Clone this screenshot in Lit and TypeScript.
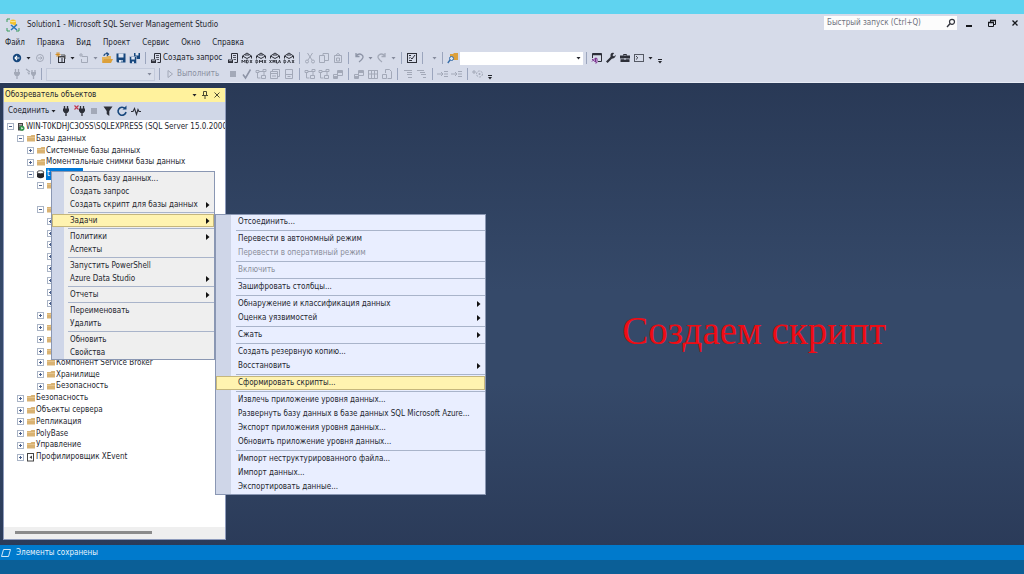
import { LitElement, html, css, svg, nothing, TemplateResult } from "lit";
import { customElement, state } from "lit/decorators.js";
import { classMap } from "lit/directives/class-map.js";

const ink = "#2d2f38";
const grey = "#a3a9b8";

const g = (body: unknown, w = 12) =>
  html`<svg width=${w} height="12" viewBox="0 0 ${w} 12" fill="none" aria-hidden="true">${body}</svg>`;

const query = (mark: string) =>
  g(svg`<path d="M1.500 6.500V4l4.500-3 4.500 3v2.500M1.500 4 6 6.500 10.500 4M4 3h4" stroke=${ink}/><path d=${mark} stroke=${ink} stroke-width=".9"/>`);

const icons: Record<string, TemplateResult> = {
  back: g(svg`<circle cx="6" cy="6" r="4.200" fill="#17477d"/><path d="M8.500 6H4m2-2L4 6l2 2" stroke="#fff" stroke-width="1.100"/>`),
  forward: g(svg`<circle cx="6" cy="6" r="3.500" stroke=${grey}/><path d="M4 6h4M6.500 4.500 8 6 6.500 7.500" stroke=${grey}/>`),
  project: g(svg`<rect x="3.500" y="4.500" width="6" height="6" stroke=${ink}/><path d="M4 5h6M6 3h4v4" stroke="#555"/><path d="M3 0v5M.5 2.500h5M1.200.8l3.600 3.500M4.800.8 1.200 4.300" stroke="#d38b1d" stroke-width=".9"/><path d="M6 7h2M6 9h2" stroke=${ink}/>`),
  addItem: g(svg`<path d="M4 4.500h5.500v6h-6V7" stroke=${grey}/><path d="M3 1v4M1 3h4" stroke=${grey}/>`),
  openFolder: g(svg`<path d="M1 5h4l1-1h4v6H1z" fill="#e4b45c"/><path d="M3 7h9l-2 4H1z" fill="#dca03b"/><path d="M3 4q0-3 4-2M5.500.5 7.500 2 6 4" stroke="#17477d" stroke-width="1.200"/>`),
  save: g(svg`<path d="M1.500 1.500h9v9h-8l-1-1z" fill="#17477d"/><path d="M3.500 1.500h5v4h-5z" fill="#dfe6f3"/><path d="M4 8h4v2.500H4z" fill="#dfe6f3"/><path d="M6.500 8.500h1v2h-1z" fill="#17477d"/>`),
  saveAll: g(svg`<path d="M5 1h6v6H5z" fill="#17477d"/><path d="M6.500 1h3v2.500h-3z" fill="#dfe6f3"/><path d="M.5 4.500h7v7h-6l-1-1z" fill="#17477d" stroke="#d6dbe9" stroke-width=".5"/><path d="M2.300 5h3.500v2.500H2.300zM3 9.500h2v2H3z" fill="#dfe6f3"/>`),
  newQuery: g(svg`<path d="M4.500 7V1.500h6v9h-3" stroke=${ink}/><path d="M6 3.500h3M6 5.500h3M6.500 7.500H9" stroke=${ink} stroke-width=".8"/><path d="M1 7.500h5v3.500H1z" fill=${ink}/><path d="M2 8.700h3" stroke="#d6dbe9" stroke-width=".7"/>`),
  mdx: query("M1 11V8l1.500 2L4 8v3M5.500 8v3h1.200q1.300-1.500 0-3zM9 8l2 3m0-3L9 11"),
  dmx: query("M1 8v3h1q1.500-1.500 0-3zM4.500 11V8L6 10l1.500-2v3M9 8l2 3m0-3L9 11"),
  xmla: query("M.5 8l2 3m0-3-2 3M4 11V8l1 2 1-2v3M7.500 8v3H9M9.500 11l1-3 1 3"),
  dax: query("M1 8v3h1q1.500-1.500 0-3zM4.500 11 6 8l1.500 3M9 8l2 3m0-3L9 11"),
  cut: g(svg`<path d="M3.500 1 8 8M8.500 1 4 8" stroke=${grey}/><circle cx="3" cy="9.500" r="1.500" stroke=${grey}/><circle cx="9" cy="9.500" r="1.500" stroke=${grey}/>`),
  copy: g(svg`<path d="M1.500 3.500h5v7h-5zM5 3V1.500h5.500v7H7" stroke=${grey}/>`),
  paste: g(svg`<path d="M2.500 5V3.500h7v7h-7zM4 3.500q2-4 4 0M4.500 6h3v3h-3z" stroke=${grey}/>`),
  undo: g(svg`<path d="M3 1v3.500h3.500M3 4q3-3.500 6-1t-3 7" stroke="#8d94a6" stroke-width="1.300"/>`),
  redo: g(svg`<path d="M9 1v3.500H5.500M9 4Q6 .5 3 3t3 7" stroke=${grey} stroke-width="1.300"/>`),
  activity: g(svg`<rect x="1.500" y="1.500" width="9" height="9" stroke=${ink}/><path d="M3 3.500h2M3 6h1M3 8.500h3M9 3 6 7 4.500 5.500" stroke=${ink}/>`),
  findFolder: g(svg`<path d="M3 2h3l1-1h4v7H3z" fill="#dca03b"/><circle cx="4.500" cy="6.500" r="2" fill="#dbe8f8" stroke="#356ca8"/><path d="M3 8 .8 11" stroke="#356ca8" stroke-width="1.300"/>`),
  studio: g(svg`<path d="M1.500 6V1.500h9v8H7" stroke=${ink}/><path d="M1.500 2.500h9" stroke=${ink} stroke-width="1.500"/><path d="m1 7 3.500 3V6L1 9.500M4.500 6l1.500.500v4l-1.500.700" stroke="#7b2d8e"/>`),
  wrench: g(svg`<path d="M1.800 10.300 7 5" stroke=${ink} stroke-width="2.200"/><path d="M10.800 2.800 9 4.500 7.500 3.200 9.200 1Q5.500 0 5.500 3.500T8 6.500t2.800-3.700" fill=${ink}/>`),
  toolbox: g(svg`<path d="M4.500 3.500v-1h3v1" stroke=${ink}/><path d="M1 3.500h10v3H1zM1.500 7.200h9V10h-9z" fill=${ink}/><path d="M5.500 6h1v2h-1z" fill="#d6dbe9"/>`),
  console: g(svg`<rect x="1.500" y="2.500" width="9" height="7" stroke="#555964"/><path d="m3 4 1.800 1.800L3 7.500" stroke=${ink} stroke-width=".9"/>`),
  plugOff: g(svg`<path d="M4.500 1v3M7.500 1v3M6 8v3" stroke=${grey} stroke-width="1.300"/><path d="M3 4h6v2L7.500 8h-3L3 6z" fill=${grey}/>`),
  plugSwap: g(svg`<path d="M1 1l4 3M7 2v2M10 2v2M8.500 8v3" stroke=${grey} stroke-width="1.300"/><path d="M6 4h5v2L9.500 8h-2L6 6zM2 4l3 1-1 2z" fill=${grey}/>`),
  play: g(svg`<path d="m4 2.500 4.500 3.500L4 9.500z" stroke=${grey}/>`),
  stop: g(svg`<path d="M3 3h6v6H3z" fill=${grey}/>`),
  check: g(svg`<path d="M2 6.500 4.500 10 9.500 1.500" stroke="#8d94a6" stroke-width="1.500"/>`),
  plan: g(svg`<path d="M1 2.500h3v2H1zM8 1.500h3v2H8zM4 3.500h4M2.500 5v5h3M6.500 7.500h4v3h-4zM9 4v3" stroke=${grey}/>`),
  windows: g(svg`<path d="M1.500 3.500h7v7h-7zM3.500 3V1.500h7v7H9M2 5.500h6M3 8h4" stroke=${grey}/>`),
  sheet: g(svg`<path d="M2.500 1.500h7v9h-7zM3 6.500h6M4.500 8.500h3" stroke=${grey}/>`),
  grid: g(svg`<path d="M1 2.500h10M1.500 2v8.500h9V2M1.500 6h9M4.500 3v7M7.500 3v7" stroke=${grey}/>`),
  blocks: g(svg`<path d="M1.500 6.500h4v4h-4zM5.500 2.500h5v5h-5z" stroke=${grey}/><path d="M6 3h4v2H6zM2 8h3v2H2z" fill=${grey}/>`),
  fileOut: g(svg`<path d="M4.500 5V1.500h4l2 2v7h-4M1.500 6.500h4v4h-4z" stroke=${grey}/>`),
  indent: g(svg`<path d="M2 2.500h8M5 4.500h5M5 6.500h5M6 9.500h4" stroke=${grey}/>`),
  outdent: g(svg`<path d="M1 2.500h7M4 4.500h5M5 6.500h5M7 9.500h3" stroke=${grey}/>`),
  shift: g(svg`<path d="M0 6h6M4 4l2 2-2 2M7 3.500h4M7 6h4M7 8.500h4" stroke=${grey}/>`),
  params: g(svg`<path d="M0 4h4M2 2v4" stroke=${grey}/><circle cx="7.500" cy="6" r="3" stroke=${grey} stroke-dasharray="2 1"/><circle cx="7.500" cy="6" r="1" fill=${grey}/>`),
  plug: g(svg`<path d="M4.500 1v3M7.500 1v3M6 8v3" stroke=${ink} stroke-width="1.400"/><path d="M3 3.500h6V6L7.500 8h-3L3 6z" fill=${ink}/>`),
  unplug: g(svg`<path d="M6.500 1v3M9.500 1v3M8 8v3" stroke=${ink} stroke-width="1.300"/><path d="M5 3.500h6V6L9.500 8h-3L5 6z" fill=${ink}/><path d="m.5.5 4 4m0-4-4 4" stroke="#c3364a" stroke-width="1.100"/>`),
  funnel: g(svg`<path d="M1.500 1.500h9L7.300 6v5L4.700 9V6z" fill=${ink}/>`),
  refresh: g(svg`<path d="M9 3.500A4 4 0 1 0 10 7" stroke="#17477d" stroke-width="1.600"/><path d="M10.500.5v4h-4z" fill="#17477d"/>`),
  pulse: g(svg`<path d="M1 6.500h2l1.500-3 2 6 1.500-5 1 2h2" stroke=${ink} stroke-width="1.100"/>`),
};

const small = (body: unknown) =>
  html`<svg width="9" height="9" viewBox="0 0 9 9" fill="none" aria-hidden="true">${body}</svg>`;

const nodeIcons: Record<string, TemplateResult> = {
  folder: small(svg`<path d="M1 2h3.500l1-1H9v6.500H1z" fill="#d9b272"/><path d="M1 3.500h8" stroke="#e9cd9c" stroke-width=".7"/>`),
  server: small(svg`<path d="M2 1h5v7.500H2z" fill="#444"/><path d="M3 2.500h3M3 4h3" stroke="#ddd" stroke-width=".7"/><circle cx="6" cy="6.300" r="2.500" fill="#2d9449"/><path d="m5.300 5 2 1.300-2 1.300z" fill="#fff"/>`),
  database: small(svg`<path d="M1 2.200v4.800Q4.500 9.500 8 7V2.200z" fill="#26262b"/><ellipse cx="4.500" cy="2.200" rx="3.300" ry="1.500" fill="#fff" stroke="#26262b" stroke-width=".8"/>`),
  profiler: small(svg`<rect x="1.500" y=".5" width="6" height="7.500" stroke="#444"/><path d="M6 2.500 3.500 4.300 6 6z" fill="#444"/>`),
  none: small(nothing),
};

interface Node { level: number; label: string; icon?: string; open?: boolean; leaf?: boolean; selected?: boolean }

const nodes: Node[] = [
  { level: 0, label: "WIN-T0KDHJC3OSS\\SQLEXPRESS (SQL Server 15.0.2000", icon: "server", open: true },
  { level: 1, label: "Базы данных", open: true },
  { level: 2, label: "Системные базы данных" },
  { level: 2, label: "Моментальные снимки базы данных" },
  { level: 2, label: "t", icon: "database", open: true, selected: true },
  { level: 3, label: "", open: true },
  { level: 4, label: "", icon: "none", leaf: true },
  { level: 3, label: "", open: true },
  ...Array.from({ length: 8 }, () => ({ level: 4, label: "" })),
  ...Array.from({ length: 4 }, () => ({ level: 3, label: "" })),
  { level: 3, label: "Компонент Service Broker" },
  { level: 3, label: "Хранилище" },
  { level: 3, label: "Безопасность" },
  { level: 1, label: "Безопасность" },
  { level: 1, label: "Объекты сервера" },
  { level: 1, label: "Репликация" },
  { level: 1, label: "PolyBase" },
  { level: 1, label: "Управление" },
  { level: 1, label: "Профилировщик XEvent", icon: "profiler" },
];

interface Entry { label: string; sub?: boolean; off?: boolean }
const sep = null;

const contextEntries: (Entry | null)[] = [
  { label: "Создать базу данных..." },
  { label: "Создать запрос" },
  { label: "Создать скрипт для базы данных", sub: true },
  sep,
  { label: "Задачи", sub: true },
  sep,
  { label: "Политики", sub: true },
  { label: "Аспекты" },
  sep,
  { label: "Запустить PowerShell" },
  { label: "Azure Data Studio", sub: true },
  sep,
  { label: "Отчеты", sub: true },
  sep,
  { label: "Переименовать" },
  { label: "Удалить" },
  sep,
  { label: "Обновить" },
  { label: "Свойства" },
];

const taskEntries: (Entry | null)[] = [
  { label: "Отсоединить..." },
  sep,
  { label: "Перевести в автономный режим" },
  { label: "Перевести в оперативный режим", off: true },
  sep,
  { label: "Включить", off: true },
  sep,
  { label: "Зашифровать столбцы..." },
  sep,
  { label: "Обнаружение и классификация данных", sub: true },
  { label: "Оценка уязвимостей", sub: true },
  sep,
  { label: "Сжать", sub: true },
  sep,
  { label: "Создать резервную копию..." },
  { label: "Восстановить", sub: true },
  sep,
  { label: "Сформировать скрипты..." },
  sep,
  { label: "Извлечь приложение уровня данных..." },
  { label: "Развернуть базу данных в базе данных SQL Microsoft Azure..." },
  { label: "Экспорт приложения уровня данных..." },
  { label: "Обновить приложение уровня данных..." },
  sep,
  { label: "Импорт неструктурированного файла..." },
  { label: "Импорт данных..." },
  { label: "Экспортировать данные..." },
];

@customElement("app-root")
export class AppRoot extends LitElement {
  @state() private contextActive = "Задачи";
  @state() private taskActive = "Сформировать скрипты...";

  static styles = css`
    :host {
      display: flex;
      flex-direction: column;
      height: 100vh;
      overflow: hidden;
      font: 8px/12px "DejaVu Sans Condensed", "DejaVu Sans", sans-serif;
      color: #24262e;
    }
    * { box-sizing: border-box; }
    button, input, select { font: inherit; color: inherit; margin: 0; padding: 0; border: 0; background: none; border-radius: 0; }
    ul { list-style: none; margin: 0; padding: 0; }
    svg { display: block; flex: none; }
    .band-top { height: 14px; background: #5fd3f0; flex: none; }
    .band-bottom { height: 14px; background: #0b5f97; flex: none; }
    .chrome { background: #d6dbe9; border-bottom: 1px solid #e6eaf4; flex: none; }
    .titlebar { display: flex; align-items: center; height: 22px; padding: 0 3px 0 6px; }
    .title { flex: 1; margin-left: 7px; }
    .search { display: flex; align-items: center; width: 133px; height: 14px; margin-bottom: 4px; padding: 0 1px 0 3px; background: #fcfcfc; }
    .search input { flex: 1; min-width: 0; outline: 0; }
    .search input::placeholder { color: #6f727c; opacity: 1; }
    .window-buttons { display: flex; gap: 11px; margin: 0 0 4px 6px; }
    .menubar { display: flex; gap: 12px; height: 14px; align-items: center; padding-left: 5px; }
    .toolbar { display: flex; align-items: center; height: 16px; }
    .grip { width: 5px; height: 12px; margin: 0 1px 0 4px; background: radial-gradient(circle, #a9b1c4 30%, transparent 40%) 0 0 / 2px 2px; flex: none; }
    .tool { display: flex; justify-content: center; align-items: center; width: 14px; height: 14px; flex: none; }
    .caret { display: flex; justify-content: center; align-items: center; width: 9px; height: 12px; flex: none; }
    .divider { width: 1px; height: 12px; margin: 0 3px; background: #9ba5bd; flex: none; }
    .text-tool { display: flex; align-items: center; justify-content: flex-start; width: 77px; height: 14px; padding-left: 1px; gap: 1px; white-space: nowrap; flex: none; }
    .execute { width: 63px; color: #8a90a1; }
    .spacer { width: 4px; }
    .combo { display: flex; align-items: center; height: 13px; background: #fff; flex: none; }
    .combo select { appearance: none; flex: 1; height: 13px; min-width: 0; outline: 0; }
    .wide { width: 123px; }
    .database { width: 109px; margin: 0 1px; background: #d9deea; border: 1px solid #c3cadb; }
    .work { flex: 1; min-height: 0; display: flex; padding: 5px 0 5px 3px; position: relative; background: linear-gradient(#293956, #354969 45%, #354969 65%, #2b3b59); }
    .panel { width: 223px; display: flex; flex-direction: column; border: 1px solid #8e9bbc; border-top: 0; background: #fff; flex: none; }
    .panel-head { display: flex; align-items: center; height: 14px; padding: 0 2px 0 1px; background: #fff29d; flex: none; }
    .panel-title { flex: 1; font: inherit; margin: 0; }
    .panel-tools { display: flex; align-items: center; height: 18px; padding-left: 4px; background: #d0d7e7; flex: none; }
    .connect { display: flex; align-items: center; gap: 2px; margin-right: 3px; }
    .tree { flex: 1; min-height: 0; display: flex; flex-direction: column; padding: 1px 0 64px 3px; overflow: hidden; }
    .node { flex: 1; min-height: 0; display: flex; align-items: center; white-space: nowrap; }
    .indent { width: 10px; flex: none; }
    .expander { width: 7px; height: 7px; margin-right: 2px; flex: none; }
    .label { padding-left: 1px; }
    .selected { background: #0078d7; color: #fff; width: 37px; margin-left: 1px; }
    .scroll { height: 12px; padding: 4px 73px 5px 11px; background: #efefef; flex: none; }
    .thumb { height: 3px; background: #8b8b8b; }
    .stage { flex: 1; display: flex; justify-content: flex-end; align-items: center; padding: 34px 138px 0 0; }
    .caption { margin: 0; font: 39px/46px "Liberation Serif", serif; color: #ee0c14; white-space: nowrap; }
    .menu { position: absolute; border: 1px solid #8a97b3; }
    .context { left: 51px; top: 88px; width: 164px; background: linear-gradient(90deg, #cfd6e8 12px, #efefef 12px); }
    .tasks { left: 215px; top: 131px; width: 271px; background: linear-gradient(90deg, #cfd6e8 15px, #e9eeff 15px); }
    .item { display: flex; align-items: center; justify-content: space-between; width: 100%; height: 13px; padding: 0 4px 0 18px; border: 1px solid transparent; border-width: 1px 0; white-space: nowrap; text-align: left; }
    .tasks .item { height: 14px; padding-left: 22px; }
    .item:disabled { color: #8b8f9b; }
    .item.active { background: #fff3b0; border-color: #c5b67c; box-shadow: inset 1px 0 #c5b67c, inset -1px 0 #c5b67c; }
    .rule { height: 1px; margin: 1px 0 1px 16px; background: #a9b4ca; }
    .tasks .rule { margin-left: 20px; }
    .status { display: flex; align-items: center; gap: 4px; height: 15px; background: #007acc; color: #e8f3fc; flex: none; }
  `;

  private tool(name: string, label = name) {
    return html`<button class="tool" aria-label=${label}>${icons[name]}</button>`;
  }
  private caret(muted = false) {
    return html`<button class="caret" aria-label="Ещё"><svg width="5" height="3" viewBox="0 0 5 3"><path d="M.5 0h4l-2 2.500z" fill=${muted ? "#858b9c" : "#22242b"} /></svg></button>`;
  }
  private overflow() {
    return html`<button class="caret" aria-label="Параметры панели"><svg width="6" height="12" viewBox="0 0 6 12"><path d="M1 7h4v1H1zM1 9h4L3 11.500z" fill="#22242b" /></svg></button>`;
  }
  private get divider() {
    return html`<span class="divider"></span>`;
  }

  private menu(entries: (Entry | null)[], kind: string, active: string, pick: (l: string) => void) {
    return html`<ul class="menu ${kind}" role="menu">
      ${entries.map((e) =>
        e
          ? html`<li role="none"><button role="menuitem" class=${classMap({ item: true, active: e.label === active })}
              ?disabled=${!!e.off} @mouseenter=${() => pick(e.label)}>${e.label}${e.sub
              ? html`<svg width="4" height="6" viewBox="0 0 4 6"><path d="M0 0l3.500 3L0 6z" fill="#111" /></svg>`
              : nothing}</button></li>`
          : html`<li class="rule" role="separator"></li>`
      )}
    </ul>`;
  }

  private node(n: Node) {
    return html`<li class="node" role="treeitem">
      ${Array.from({ length: n.level }, () => html`<span class="indent"></span>`)}
      <svg class="expander" viewBox="0 0 7 7" fill="none">${n.leaf
        ? nothing
        : svg`<rect x=".5" y=".5" width="6" height="6" stroke="#a9b4c6"/><path d=${n.open ? "M2 3.500h3" : "M2 3.500h3M3.500 2v3"} stroke="#4a5f8c"/>`}</svg>
      ${nodeIcons[n.icon ?? "folder"]}
      <span class=${classMap({ label: true, selected: !!n.selected })}>${n.label}</span>
    </li>`;
  }

  render() {
    return html`
      <div class="band-top"></div>
      <header class="chrome">
        <div class="titlebar">
          <svg width="14" height="14" viewBox="0 0 14 14" fill="none">
            <path d="M1 4V1h3M1 10v3h3M13 10v3h-3" stroke="#3a9c5c" />
            <path d="M4 2.500q3-2 6 0v6l-3-2-3-1z" fill="#f2c230" />
            <path d="M4 3q3 1.500 6 0" stroke="#fff3b8" stroke-width=".8" />
            <path d="m5 7 6 5M11 6.500 5 12" stroke="#2876b8" stroke-width="1.500" />
          </svg>
          <span class="title">Solution1 - Microsoft SQL Server Management Studio</span>
          <label class="search">
            <input type="search" aria-label="Быстрый запуск" placeholder="Быстрый запуск (Ctrl+Q)" />
            <svg width="10" height="10" viewBox="0 0 10 10" fill="none"><circle cx="6" cy="3.800" r="2.500" stroke="#33353d" stroke-width="1.200" /><path d="M4.200 5.600 1 9" stroke="#33353d" stroke-width="1.400" /></svg>
          </label>
          <div class="window-buttons">
            <button aria-label="Свернуть"><svg width="12" height="12" viewBox="0 0 12 12"><path d="M3 8h6v2H3z" fill="#15171c" /></svg></button>
            <button aria-label="Восстановить"><svg width="12" height="12" viewBox="0 0 12 12" fill="none"><path d="M2.500 5.500h5v4h-5zM4.500 5V3.500h5v4H8" stroke="#15171c" /><path d="M2 5.500h6M4 3.500h6" stroke="#15171c" stroke-width="1.500" /></svg></button>
            <button aria-label="Закрыть"><svg width="12" height="12" viewBox="0 0 12 12" fill="none"><path d="m3.500 3.500 5 5m0-5-5 5" stroke="#15171c" stroke-width="1.300" /></svg></button>
          </div>
        </div>
        <nav class="menubar">
          ${["Файл", "Правка", "Вид", "Проект", "Сервис", "Окно", "Справка"].map((m) => html`<button>${m}</button>`)}
        </nav>
        <div class="toolbar">
          <span class="grip"></span>
          ${this.tool("back")}${this.caret()}${this.tool("forward")}${this.divider}
          ${this.tool("project")}${this.caret()}${this.tool("addItem")}${this.caret(true)}
          ${this.tool("openFolder")}${this.tool("save")}${this.tool("saveAll")}${this.divider}
          <button class="text-tool">${icons.newQuery}Создать запрос</button>
          ${this.tool("newQuery")}${["mdx", "dmx", "xmla", "dax"].map((n) => this.tool(n))}${this.divider}
          ${["cut", "copy", "paste"].map((n) => this.tool(n))}${this.divider}
          ${this.tool("undo")}${this.caret(true)}${this.tool("redo")}${this.caret(true)}${this.divider}
          ${this.tool("activity")}${this.divider}<span class="spacer"></span>${this.caret(true)}${this.divider}
          ${this.tool("findFolder")}
          <label class="combo wide"><select aria-label="Найти"><option></option></select>${this.caret()}</label>
          ${this.divider}${["studio", "wrench", "toolbox", "console"].map((n) => this.tool(n))}
          ${this.caret()}${this.overflow()}
        </div>
        <div class="toolbar">
          <span class="grip"></span>
          ${this.tool("plugOff")}${this.tool("plugSwap")}${this.divider}
          <label class="combo database"><select aria-label="База данных" disabled><option></option></select>${this.caret(true)}</label>
          ${this.divider}
          <button class="text-tool execute">${icons.play}Выполнить</button>
          ${["stop", "check", "plan", "windows", "sheet"].map((n) => this.tool(n))}${this.divider}
          ${["plan", "plan", "blocks"].map((n) => this.tool(n))}${this.divider}
          ${["blocks", "grid", "fileOut"].map((n) => this.tool(n))}${this.divider}
          ${["indent", "outdent"].map((n) => this.tool(n))}${this.divider}
          ${["shift", "shift"].map((n) => this.tool(n))}${this.divider}
          ${this.tool("params")}${this.overflow()}
        </div>
      </header>
      <main class="work">
        <section class="panel">
          <div class="panel-head">
            <h2 class="panel-title">Обозреватель объектов</h2>
            ${this.caret()}
            <button aria-label="Закрепить"><svg width="12" height="12" viewBox="0 0 12 12" fill="none"><path d="M4.500 2.500h3v4h-3zM3 6.500h6M6 7v3" stroke="#4c4a33" /></svg></button>
            <button aria-label="Закрыть"><svg width="12" height="12" viewBox="0 0 12 12" fill="none"><path d="m3.500 3.500 5 5m0-5-5 5" stroke="#4c4a33" /></svg></button>
          </div>
          <div class="panel-tools">
            <button class="connect">Соединить<svg width="5" height="3" viewBox="0 0 5 3"><path d="M.5 0h4l-2 2.500z" fill="#22242b" /></svg></button>
            ${["plug", "unplug", "stop", "funnel", "refresh", "pulse"].map((n) => this.tool(n))}
          </div>
          <ul class="tree" role="tree">${nodes.map((n) => this.node(n))}</ul>
          <div class="scroll"><div class="thumb"></div></div>
        </section>
        <div class="stage"><p class="caption">Создаем скрипт</p></div>
        ${this.menu(contextEntries, "context", this.contextActive, (l) => (this.contextActive = l))}
        ${this.menu(taskEntries, "tasks", this.taskActive, (l) => (this.taskActive = l))}
      </main>
      <footer class="status">
        <svg width="12" height="10" viewBox="0 0 12 10" fill="none"><path d="M3.500 1.500h7l-2 7h-7z" stroke="#d4e9f8" /></svg>
        <span>Элементы сохранены</span>
      </footer>
      <div class="band-bottom"></div>
    `;
  }
}
